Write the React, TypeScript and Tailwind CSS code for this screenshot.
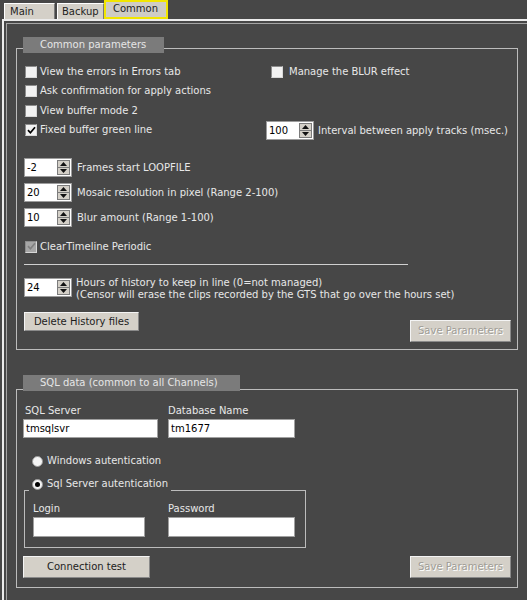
import type { ReactNode } from "react";

function Check({ checked, disabled }: { checked?: boolean; disabled?: boolean }) {
  return (
    <span
      className={`flex h-[12px] w-[12px] shrink-0 items-center justify-center border border-t-[#8c8c8c] border-l-[#8c8c8c] border-r-[#d8d8d8] border-b-[#d8d8d8] ${
        disabled ? "bg-[#a6a6a6]" : "bg-[#f2f2f2]"
      }`}
    >
      {checked && (
        <svg width="9" height="9" viewBox="0 0 9 9">
          <path
            d="M1 4.2 L3.4 6.8 L8 1.2"
            fill="none"
            stroke={disabled ? "#808080" : "#000"}
            strokeWidth="1.7"
          />
        </svg>
      )}
    </span>
  );
}

function Radio({ checked }: { checked?: boolean }) {
  return (
    <span className="flex h-[11px] w-[11px] shrink-0 items-center justify-center rounded-full border border-[#9a9a9a] bg-[#f4f4f4]">
      {checked && <span className="h-[5px] w-[5px] rounded-full bg-black" />}
    </span>
  );
}

function Spin({ value }: { value: string }) {
  return (
    <div className="flex h-[19px] w-[48px] shrink-0 border border-[#9c9c9c] bg-white">
      <span className="flex-1 pl-[2px] leading-[17px] text-black">{value}</span>
      <div className="my-[1px] mr-[1px] flex w-[13px] flex-col border border-[#7c7c7c] bg-[#d4d0c8]">
        <span className="flex flex-1 items-center justify-center border-b border-[#7c7c7c]">
          <svg width="7" height="4" viewBox="0 0 7 4">
            <path d="M0 4 L3.5 0 L7 4Z" fill="#111" />
          </svg>
        </span>
        <span className="flex flex-1 items-center justify-center">
          <svg width="7" height="4" viewBox="0 0 7 4">
            <path d="M0 0 L3.5 4 L7 0Z" fill="#111" />
          </svg>
        </span>
      </div>
    </div>
  );
}

function Btn({ label, className, disabled }: { label: string; className: string; disabled?: boolean }) {
  return (
    <button
      className={`flex items-center justify-center border border-t-[#f4f4f4] border-l-[#f4f4f4] border-r-[#8a8a8a] border-b-[#8a8a8a] bg-[#d4d0c8] ${
        disabled ? "text-[#a09d96] [text-shadow:1px_1px_0_#fff]" : "text-[#1c1c1c]"
      } ${className}`}
    >
      {label}
    </button>
  );
}

function Input({ value, className }: { value?: string; className: string }) {
  return (
    <div className={`border border-[#a0a0a0] bg-white pl-[2px] text-black ${className}`}>{value}</div>
  );
}

function GroupTitle({ children, className }: { children: ReactNode; className: string }) {
  return (
    <div className={`relative z-10 ml-[7px] h-[16px] bg-[#7b7b7b] pl-[17px] leading-[16px] text-[#e6e6e6] ${className}`}>
      {children}
    </div>
  );
}

export default function App() {
  return (
    <div className="h-[600px] w-[527px] overflow-hidden bg-[#474747] font-['DejaVu_Sans',sans-serif] text-[10px] leading-[12px] text-[#e8e8e8]">
      {/* tabs */}
      <div className="flex h-[19px] items-end pl-[4px] text-[#1e1e1e]">
        <div className="h-[16px] w-[51px] border border-t-white border-l-white border-r-[#7a7a7a] border-b-0 bg-[#d4d0c8] pl-[5px] leading-[15px]">
          Main
        </div>
        <div className="ml-[2px] h-[16px] w-[47px] border border-t-white border-l-white border-r-[#7a7a7a] border-b-0 bg-[#d4d0c8] pl-[4px] leading-[15px]">
          Backup
        </div>
        <div className="h-[19px] w-[64px] border-2 border-[#f2e600] bg-[#cfccc5] pl-[7px] leading-[14px]">
          Common
        </div>
      </div>

      {/* tab page */}
      <div className="ml-[2px] border-t-2 border-l-2 border-[#ececec]">
        <div className="ml-[2px] mt-[2px] h-[600px] border-t border-l border-[#a4a4a4] pl-[9px] pt-[13px]">
          {/* Common parameters */}
          <GroupTitle className="w-[141px]">Common parameters</GroupTitle>
          <div className="-mt-[5px] flex w-[502px] flex-col border border-[#bcbcbc] pb-[7px] pl-[7px] pr-[6px] pt-[13px]">
            <div className="flex h-[78px]">
              <div className="flex w-[242px] flex-col">
                {[
                  ["View the errors in Errors tab", false],
                  ["Ask confirmation for apply actions", false],
                  ["View buffer mode 2", false],
                  ["Fixed buffer green line", true],
                ].map(([label, checked]) => (
                  <div key={label as string} className="ml-[1px] flex h-[19.5px] items-center gap-[3px]">
                    <Check checked={checked as boolean} />
                    <span>{label}</span>
                  </div>
                ))}
              </div>
              <div className="flex flex-col justify-between">
                <div className="ml-[5px] flex h-[19.5px] items-center gap-[6px]">
                  <Check />
                  <span>Manage the BLUR effect</span>
                </div>
                <div className="flex items-center gap-[4px]">
                  <Spin value="100" />
                  <span>Interval between apply tracks (msec.)</span>
                </div>
              </div>
            </div>

            <div className="mt-[18px] flex flex-col gap-[6px]">
              <div className="flex items-center gap-[5px]">
                <Spin value="-2" />
                <span>Frames start LOOPFILE</span>
              </div>
              <div className="flex items-center gap-[5px]">
                <Spin value="20" />
                <span>Mosaic resolution in pixel (Range 2-100)</span>
              </div>
              <div className="flex items-center gap-[5px]">
                <Spin value="10" />
                <span>Blur amount (Range 1-100)</span>
              </div>
            </div>

            <div className="ml-[1px] mt-[10px] flex h-[19px] items-center gap-[3px]">
              <Check checked disabled />
              <span>ClearTimeline Periodic</span>
            </div>

            <div className="mt-[8px] h-px w-[384px] bg-[#d0d0d0]" />

            <div className="mt-[13px] flex h-[24px] items-start gap-[4px]">
              <Spin value="24" />
              <div className="-mt-[1px]">
                <div>Hours of history to keep in line (0=not managed)</div>
                <div>(Censor will erase the clips recorded by the GTS that go over the hours set)</div>
              </div>
            </div>

            <div className="mt-[10px] flex items-start justify-between">
              <Btn label="Delete History files" className="h-[19px] w-[115px]" />
              <Btn label="Save Parameters" disabled className="mt-[8px] h-[22px] w-[101px]" />
            </div>
          </div>

          {/* SQL data */}
          <div className="mt-[25px]">
            <GroupTitle className="w-[217px]">SQL data (common to all Channels)</GroupTitle>
          </div>
          <div className="-mt-[2px] flex w-[502px] flex-col border border-[#bcbcbc] pb-[9px] pl-[6px] pr-[6px] pt-[15px]">
            <div className="flex gap-[10px]">
              <div className="flex flex-col">
                <span className="pl-[2px]">SQL Server</span>
                <Input value="tmsqlsvr" className="mt-[2px] h-[19px] w-[135px] leading-[17px]" />
              </div>
              <div className="flex flex-col">
                <span>Database Name</span>
                <Input value="tm1677" className="mt-[2px] h-[19px] w-[127px] leading-[17px]" />
              </div>
            </div>

            <div className="ml-[9px] mt-[16px] flex h-[14px] items-center gap-[4px]">
              <Radio />
              <span>Windows autentication</span>
            </div>

            <div className="relative z-10 ml-[6px] mt-[9px] flex h-[14px] w-fit items-center gap-[4px] bg-[#474747] px-[3px]">
              <Radio checked />
              <span>Sql Server autentication</span>
            </div>
            <div className="-mt-[1px] ml-[1px] flex w-[282px] gap-[23px] border border-[#bcbcbc] pb-[10px] pl-[8px] pt-[12px]">
              <div className="flex flex-col">
                <span>Login</span>
                <Input className="mt-[2px] h-[20px] w-[112px]" />
              </div>
              <div className="flex flex-col">
                <span>Password</span>
                <Input className="mt-[2px] h-[20px] w-[127px]" />
              </div>
            </div>

            <div className="mt-[8px] flex items-start justify-between">
              <Btn label="Connection test" className="h-[22px] w-[127px]" />
              <Btn label="Save Parameters" disabled className="h-[22px] w-[101px]" />
            </div>
          </div>
        </div>
      </div>
    </div>
  );
}
